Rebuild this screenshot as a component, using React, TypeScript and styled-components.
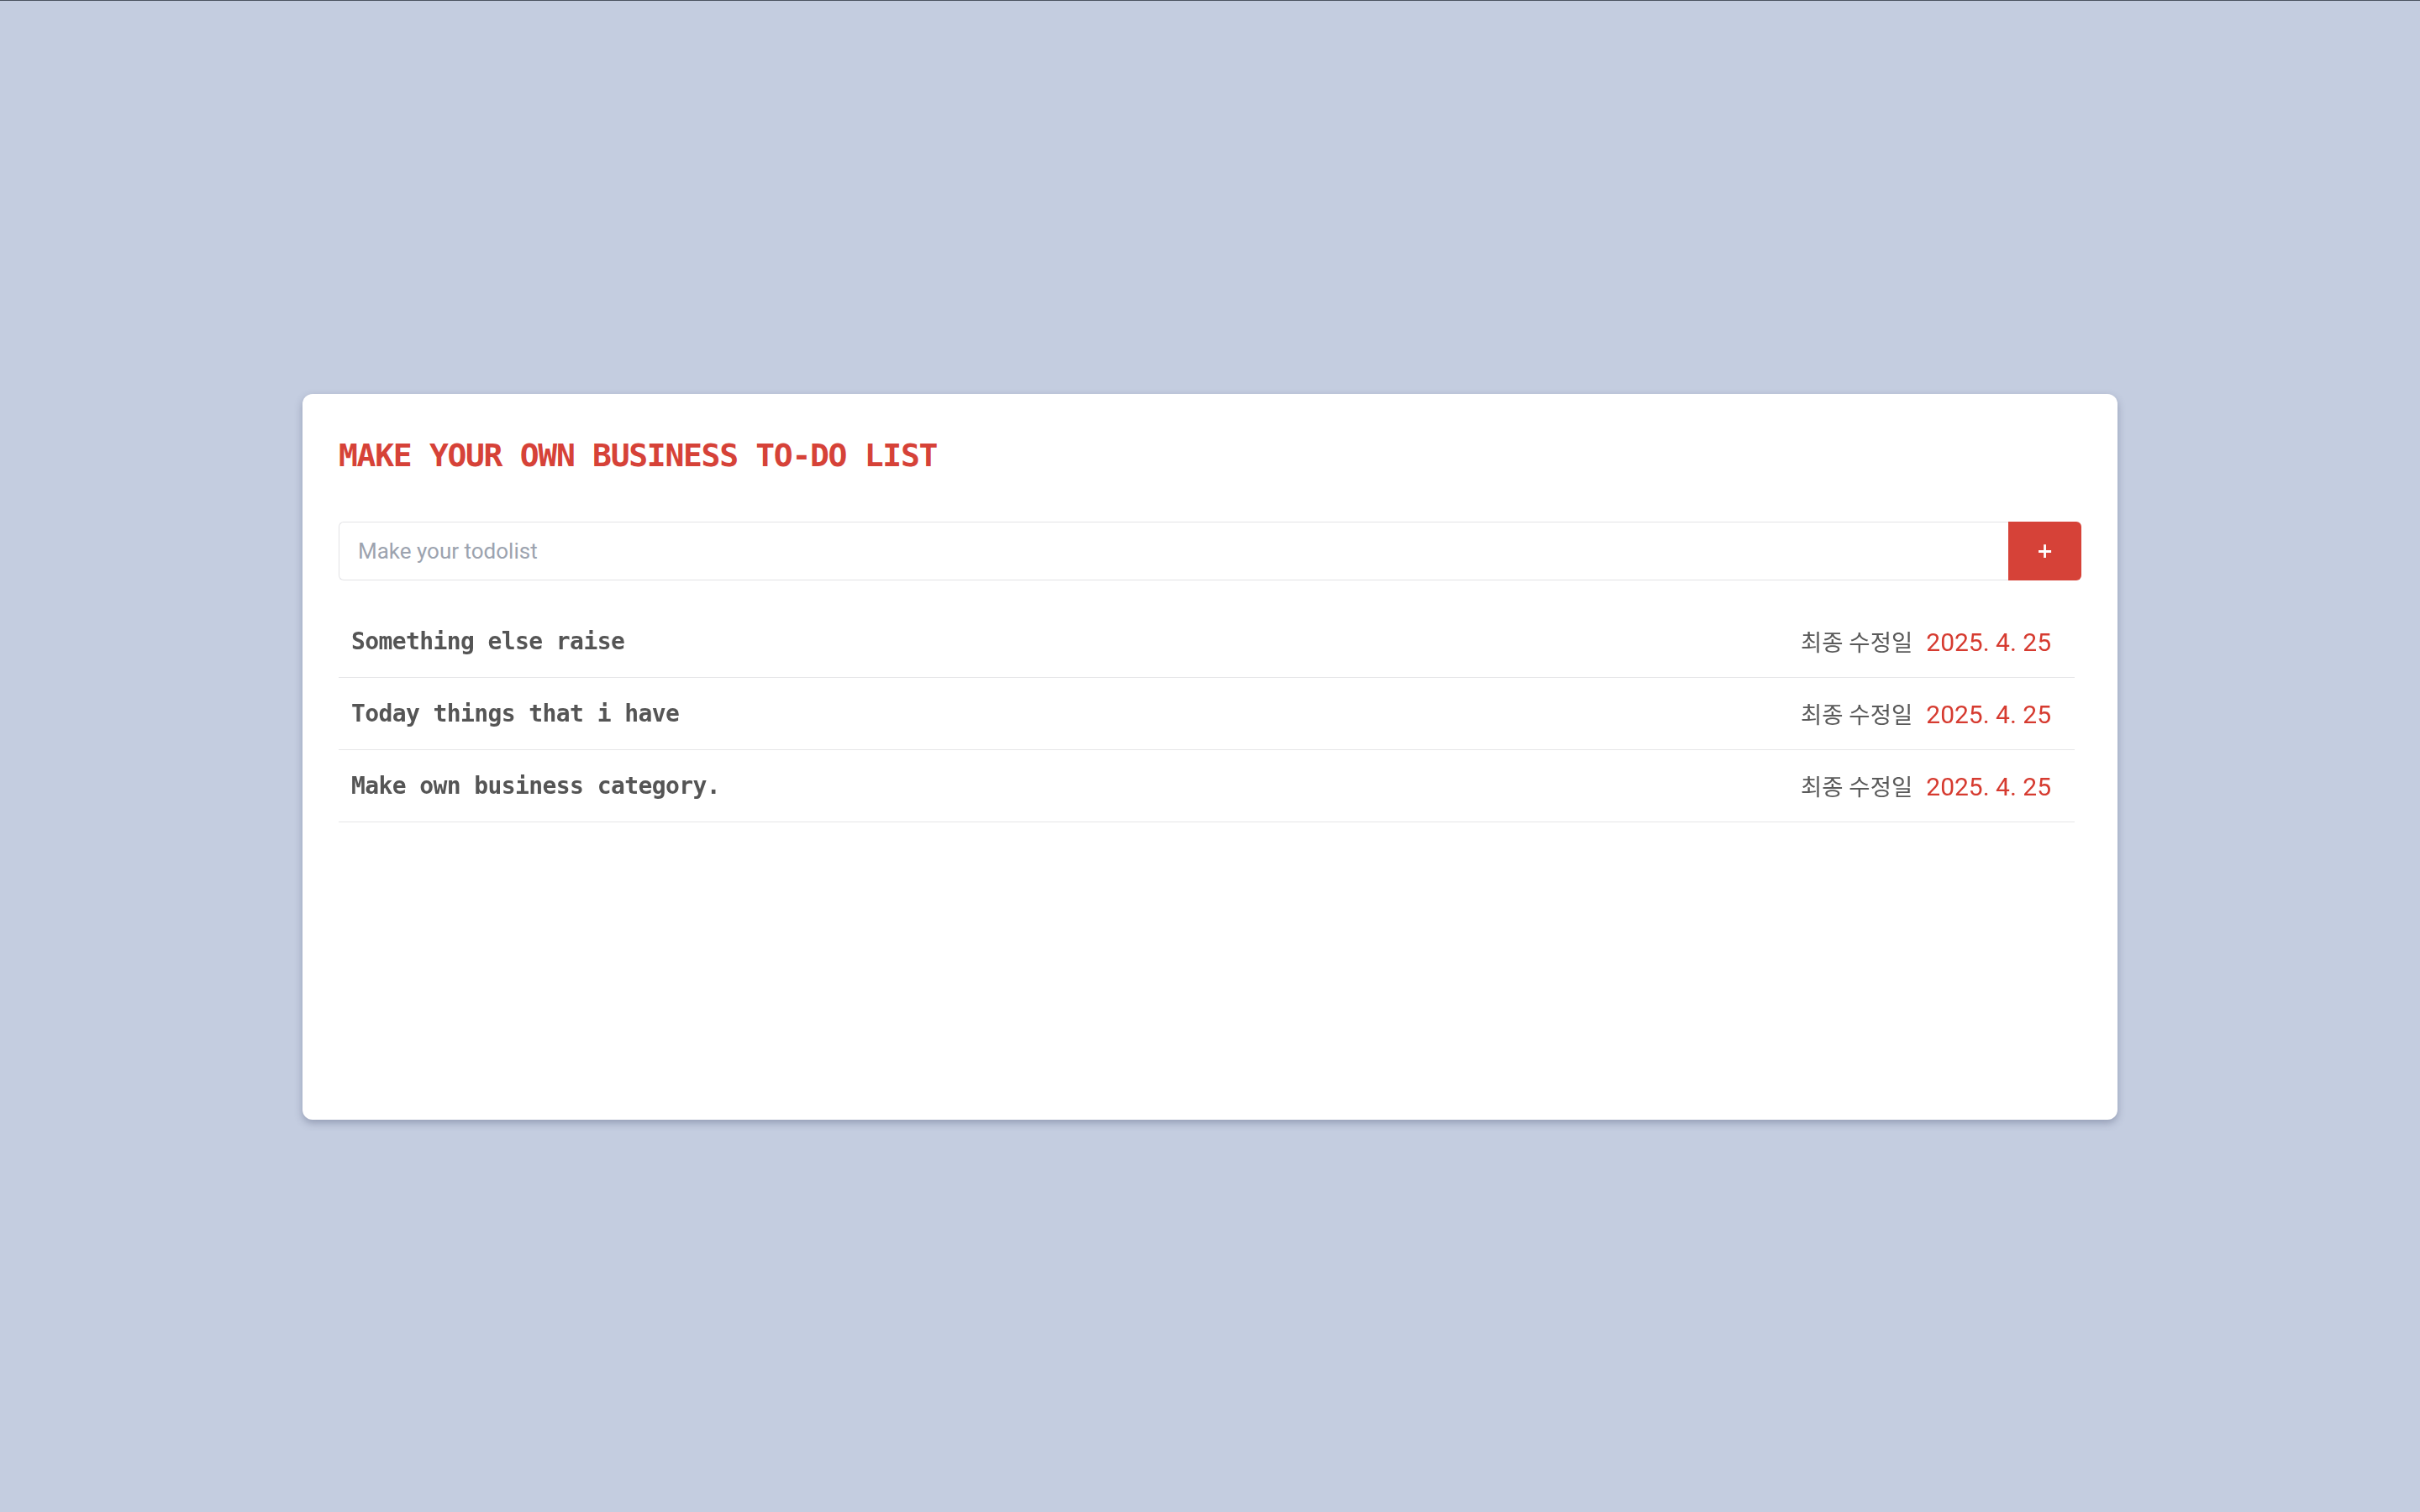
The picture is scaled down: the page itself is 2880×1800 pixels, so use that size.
import React, { useState } from 'react';
import styled, { createGlobalStyle } from 'styled-components';

const GlobalStyle = createGlobalStyle`
  * {
    box-sizing: border-box;
  }
  html, body {
    margin: 0;
    padding: 0;
  }
  body {
    background: #c4cde0;
    border-top: 1px solid #4b5361;
    font-family: Roboto, 'Noto Sans CJK KR', sans-serif;
  }
`;

const Page = styled.div`
  min-height: calc(100vh - 1px);
  display: flex;
  align-items: center;
  justify-content: center;
`;

const Card = styled.div`
  width: 2160px;
  height: 864px;
  background: #ffffff;
  border-radius: 12px;
  box-shadow: 0 4px 10px rgba(60, 70, 100, 0.35);
  padding: 50px 43px 43px;
  display: flex;
  flex-direction: column;
`;

const Title = styled.h1`
  margin: 0;
  font-family: 'DejaVu Sans Mono', monospace;
  font-weight: 700;
  font-size: 38px;
  line-height: 46px;
  letter-spacing: -1.3px;
  color: #d64238;
`;

const InputRow = styled.form`
  display: flex;
  height: 70px;
  margin-top: 56px;
`;

const TodoInput = styled.input`
  flex: 1;
  height: 100%;
  border: 1px solid #e3e3e6;
  border-right: none;
  border-radius: 6px 0 0 6px;
  padding: 0 22px;
  font-family: Roboto, 'Noto Sans CJK KR', sans-serif;
  font-size: 26px;
  color: #333;
  outline: none;

  &::placeholder {
    color: #9ca3af;
  }
`;

const AddButton = styled.button`
  width: 87px;
  height: 100%;
  border: none;
  border-radius: 0 6px 6px 0;
  background: #d64238;
  color: #ffffff;
  font-family: 'DejaVu Sans', sans-serif;
  font-weight: 700;
  font-size: 24px;
  cursor: pointer;
`;

const List = styled.ul`
  list-style: none;
  margin: 30px 8px 0 0;
  padding: 0;
`;

const Item = styled.li`
  display: flex;
  align-items: center;
  justify-content: space-between;
  height: 86px;
  padding: 0 28px 0 15px;
  border-bottom: 1px solid #e6e6e8;
`;

const ItemText = styled.span`
  font-family: 'DejaVu Sans Mono', monospace;
  font-weight: 700;
  font-size: 28px;
  letter-spacing: -0.6px;
  color: #555555;
`;

const Meta = styled.div`
  display: flex;
  align-items: baseline;
  gap: 16px;
`;

const MetaLabel = styled.span`
  font-family: Roboto, 'Noto Sans CJK KR', sans-serif;
  font-size: 27.5px;
  color: #5a5a5a;
`;

const MetaDate = styled.span`
  font-family: Roboto, 'Noto Sans CJK KR', sans-serif;
  font-size: 30px;
  color: #d63b30;
`;

type Todo = { id: number; text: string; date: string };

function App() {
  const [value, setValue] = useState<string>('');
  const [todos, setTodos] = useState<Todo[]>([
    { id: 3, text: 'Something else raise', date: '2025. 4. 25' },
    { id: 2, text: 'Today things that i have', date: '2025. 4. 25' },
    { id: 1, text: 'Make own business category.', date: '2025. 4. 25' },
  ]);

  const addTodo = (e: React.FormEvent) => {
    e.preventDefault();
    if (!value.trim()) return;
    setTodos([{ id: Date.now(), text: value, date: '2025. 4. 25' }, ...todos]);
    setValue('');
  };

  return (
    <>
      <GlobalStyle />
      <Page>
        <Card>
          <Title>MAKE YOUR OWN BUSINESS TO-DO LIST</Title>
          <InputRow onSubmit={addTodo}>
            <TodoInput
              autoFocus
              placeholder="Make your todolist"
              value={value}
              onChange={(e) => setValue(e.currentTarget.value)}
            />
            <AddButton type="submit">+</AddButton>
          </InputRow>
          <List>
            {todos.map((todo) => (
              <Item key={todo.id}>
                <ItemText>{todo.text}</ItemText>
                <Meta>
                  <MetaLabel>최종 수정일</MetaLabel>
                  <MetaDate>{todo.date}</MetaDate>
                </Meta>
              </Item>
            ))}
          </List>
        </Card>
      </Page>
    </>
  );
}

export default App;
